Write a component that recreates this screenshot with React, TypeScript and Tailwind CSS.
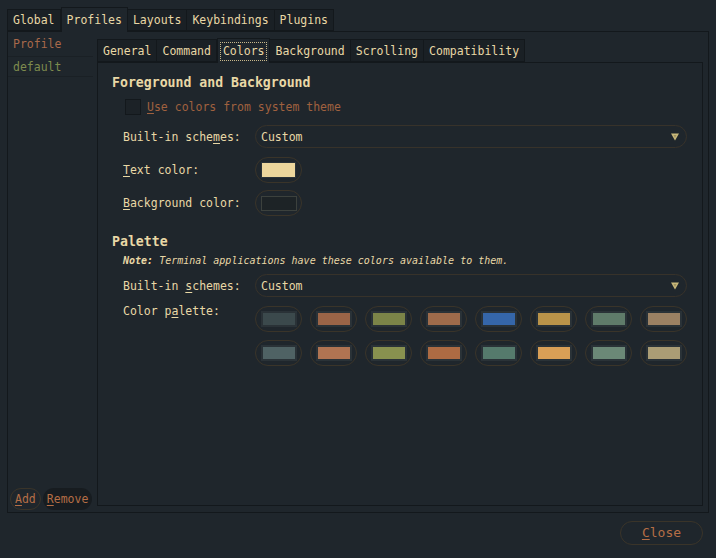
import React from "react";

const font = { fontFamily: '"DejaVu Sans Mono", "Liberation Mono", monospace' };

const outerTabs = ["Global", "Profiles", "Layouts", "Keybindings", "Plugins"];
const innerTabs = ["General", "Command", "Colors", "Background", "Scrolling", "Compatibility"];

const palette = [
  ["#3b494c", "#9a6447", "#7b8448", "#9e6b4b", "#3566a9", "#b99349", "#5f7b6a", "#9b8163"],
  ["#4f6264", "#b07452", "#88914f", "#ad6b43", "#557a6c", "#d99f56", "#6b8877", "#ab9d75"],
];

function U({ children }: { children: React.ReactNode }) {
  return <span className="underline underline-offset-[2px]">{children}</span>;
}

function Swatch({ color, framed }: { color: string; framed?: boolean }) {
  return (
    <button className="w-[47px] h-[26px] rounded-full border border-[#3a3429] flex items-center justify-center">
      <span
        className={
          framed
            ? "w-[36px] h-[15px] border border-[#3c413d] bg-[#1d2326]"
            : "w-[36px] h-[16px] border-2 border-[#2a3237]"
        }
      >
        {!framed && <span className="block w-full h-full" style={{ background: color }} />}
      </span>
    </button>
  );
}

function Combo({ value }: { value: string }) {
  return (
    <div className="w-[432px] h-[23px] rounded-full border border-[#37322a] flex items-center justify-between pl-[5px] pr-[7px] text-[#e9d8a6]">
      <span>{value}</span>
      <svg width="8" height="8" viewBox="0 0 8 8">
        <polygon points="0,0.5 8,0.5 4,7.5" fill="#c9b97a" />
        <polygon points="2.5,2 5.5,2 4,5" fill="#9e9160" />
      </svg>
    </div>
  );
}

export default function App() {
  return (
    <div
      className="w-[716px] h-[558px] bg-[#1f262c] text-[11.5px] leading-[16px] text-[#e9d8a6] flex flex-col overflow-hidden"
      style={font}
    >
      {/* Outer notebook */}
      <div className="ml-[7px] mr-[7px] mt-[7px] flex flex-col">
        <div className="flex items-end h-[24px]">
          {outerTabs.map((t) =>
            t === "Profiles" ? (
              <div
                key={t}
                className="h-[25px] -mb-px px-[5px] border border-b-0 border-[#13181c] bg-[#1f262c] flex items-center relative z-10"
              >
                {t}
              </div>
            ) : (
              <div
                key={t}
                className="h-[22px] px-[5px] border border-[#13181c] border-l-0 first:border-l bg-[#1a2025] flex items-center"
              >
                {t}
              </div>
            )
          )}
        </div>

        <div className="h-[482px] border border-[#13181c] flex">
          {/* Profile list */}
          <div className="w-[85px] flex flex-col">
            <div className="h-[25px] pl-[5px] flex items-center text-[#a9694a] border-b border-[#1a2025]">
              Profile
            </div>
            <div className="h-[20px] pl-[5px] flex items-center text-[#7e8b4e] border-b border-[#1a2025]">
              default
            </div>
            <div className="flex-1" />
            <div className="flex gap-[2px] pl-[2px] mb-[2px] text-[#b56e46]">
              <button className="h-[22px] px-[4px] rounded-full border border-[#3a3429]">
                <U>A</U>dd
              </button>
              <button className="h-[22px] px-[4px] rounded-full bg-[#171c20]">
                <U>R</U>emove
              </button>
            </div>
          </div>

          {/* Inner notebook */}
          <div className="ml-[4px] mt-[6px] mb-[6px] w-[606px] flex flex-col">
            <div className="flex items-end h-[24px]">
              {innerTabs.map((t) =>
                t === "Colors" ? (
                  <div
                    key={t}
                    className="h-[25px] -mb-px px-[2px] border border-b-0 border-[#13181c] bg-[#1f262c] flex items-center relative z-10"
                  >
                    <span className="px-[2px] h-[19px] border border-dotted border-[#c8b88a] flex items-center">
                      {t}
                    </span>
                  </div>
                ) : (
                  <div
                    key={t}
                    className="h-[23px] px-[5px] border border-[#13181c] border-l-0 first:border-l bg-[#1a2025] flex items-center"
                  >
                    {t}
                  </div>
                )
              )}
            </div>

            <div className="flex-1 border border-[#13181c] pl-[14px] pt-[11px] flex flex-col">
              <div className="text-[13.2px] leading-[18px] font-bold">Foreground and Background</div>

              <div className="ml-[13px] mt-[7px] flex items-center gap-[6px] text-[#a0613f]">
                <span className="w-[16px] h-[16px] border border-[#13181c] bg-[#1c2227]" />
                <span>
                  <U>U</U>se colors from system theme
                </span>
              </div>

              <div className="ml-[11px] mt-[10px] flex items-center">
                <span className="w-[132px]">
                  Built-in sche<U>m</U>es:
                </span>
                <Combo value="Custom" />
              </div>

              <div className="ml-[11px] mt-[9px] flex items-center">
                <span className="w-[132px]">
                  <U>T</U>ext color:
                </span>
                <button className="w-[47px] h-[26px] rounded-full border border-[#3a3429] flex items-center justify-center">
                  <span className="w-[35px] h-[16px] border border-[#2a3237] bg-[#ecd69c]" />
                </button>
              </div>

              <div className="ml-[11px] mt-[7px] flex items-center">
                <span className="w-[132px]">
                  <U>B</U>ackground color:
                </span>
                <Swatch color="#1d2326" framed />
              </div>

              <div className="mt-[17px] text-[13.2px] leading-[18px] font-bold">Palette</div>

              <div className="ml-[11px] mt-[3px] text-[10px] leading-[14px] italic">
                <span className="font-bold">Note:</span> Terminal applications have these colors available to them.
              </div>

              <div className="ml-[11px] mt-[6px] flex items-center">
                <span className="w-[132px]">
                  Built-in <U>s</U>chemes:
                </span>
                <Combo value="Custom" />
              </div>

              <div className="ml-[11px] mt-[9px] flex items-start">
                <span className="w-[132px] -mt-[3px]">
                  Color p<U>a</U>lette:
                </span>
                <div className="flex flex-col gap-[8px]">
                  {palette.map((row, i) => (
                    <div key={i} className="flex gap-[8px]">
                      {row.map((c, j) => (
                        <Swatch key={j} color={c} />
                      ))}
                    </div>
                  ))}
                </div>
              </div>
            </div>
          </div>
        </div>
      </div>

      {/* Bottom buttons */}
      <div className="flex justify-end mt-[8px] mr-[13px]">
        <button className="w-[83px] h-[24px] rounded-full border border-[#3a3429] text-[13px] text-[#b56e46]">
          <U>C</U>lose
        </button>
      </div>
    </div>
  );
}
